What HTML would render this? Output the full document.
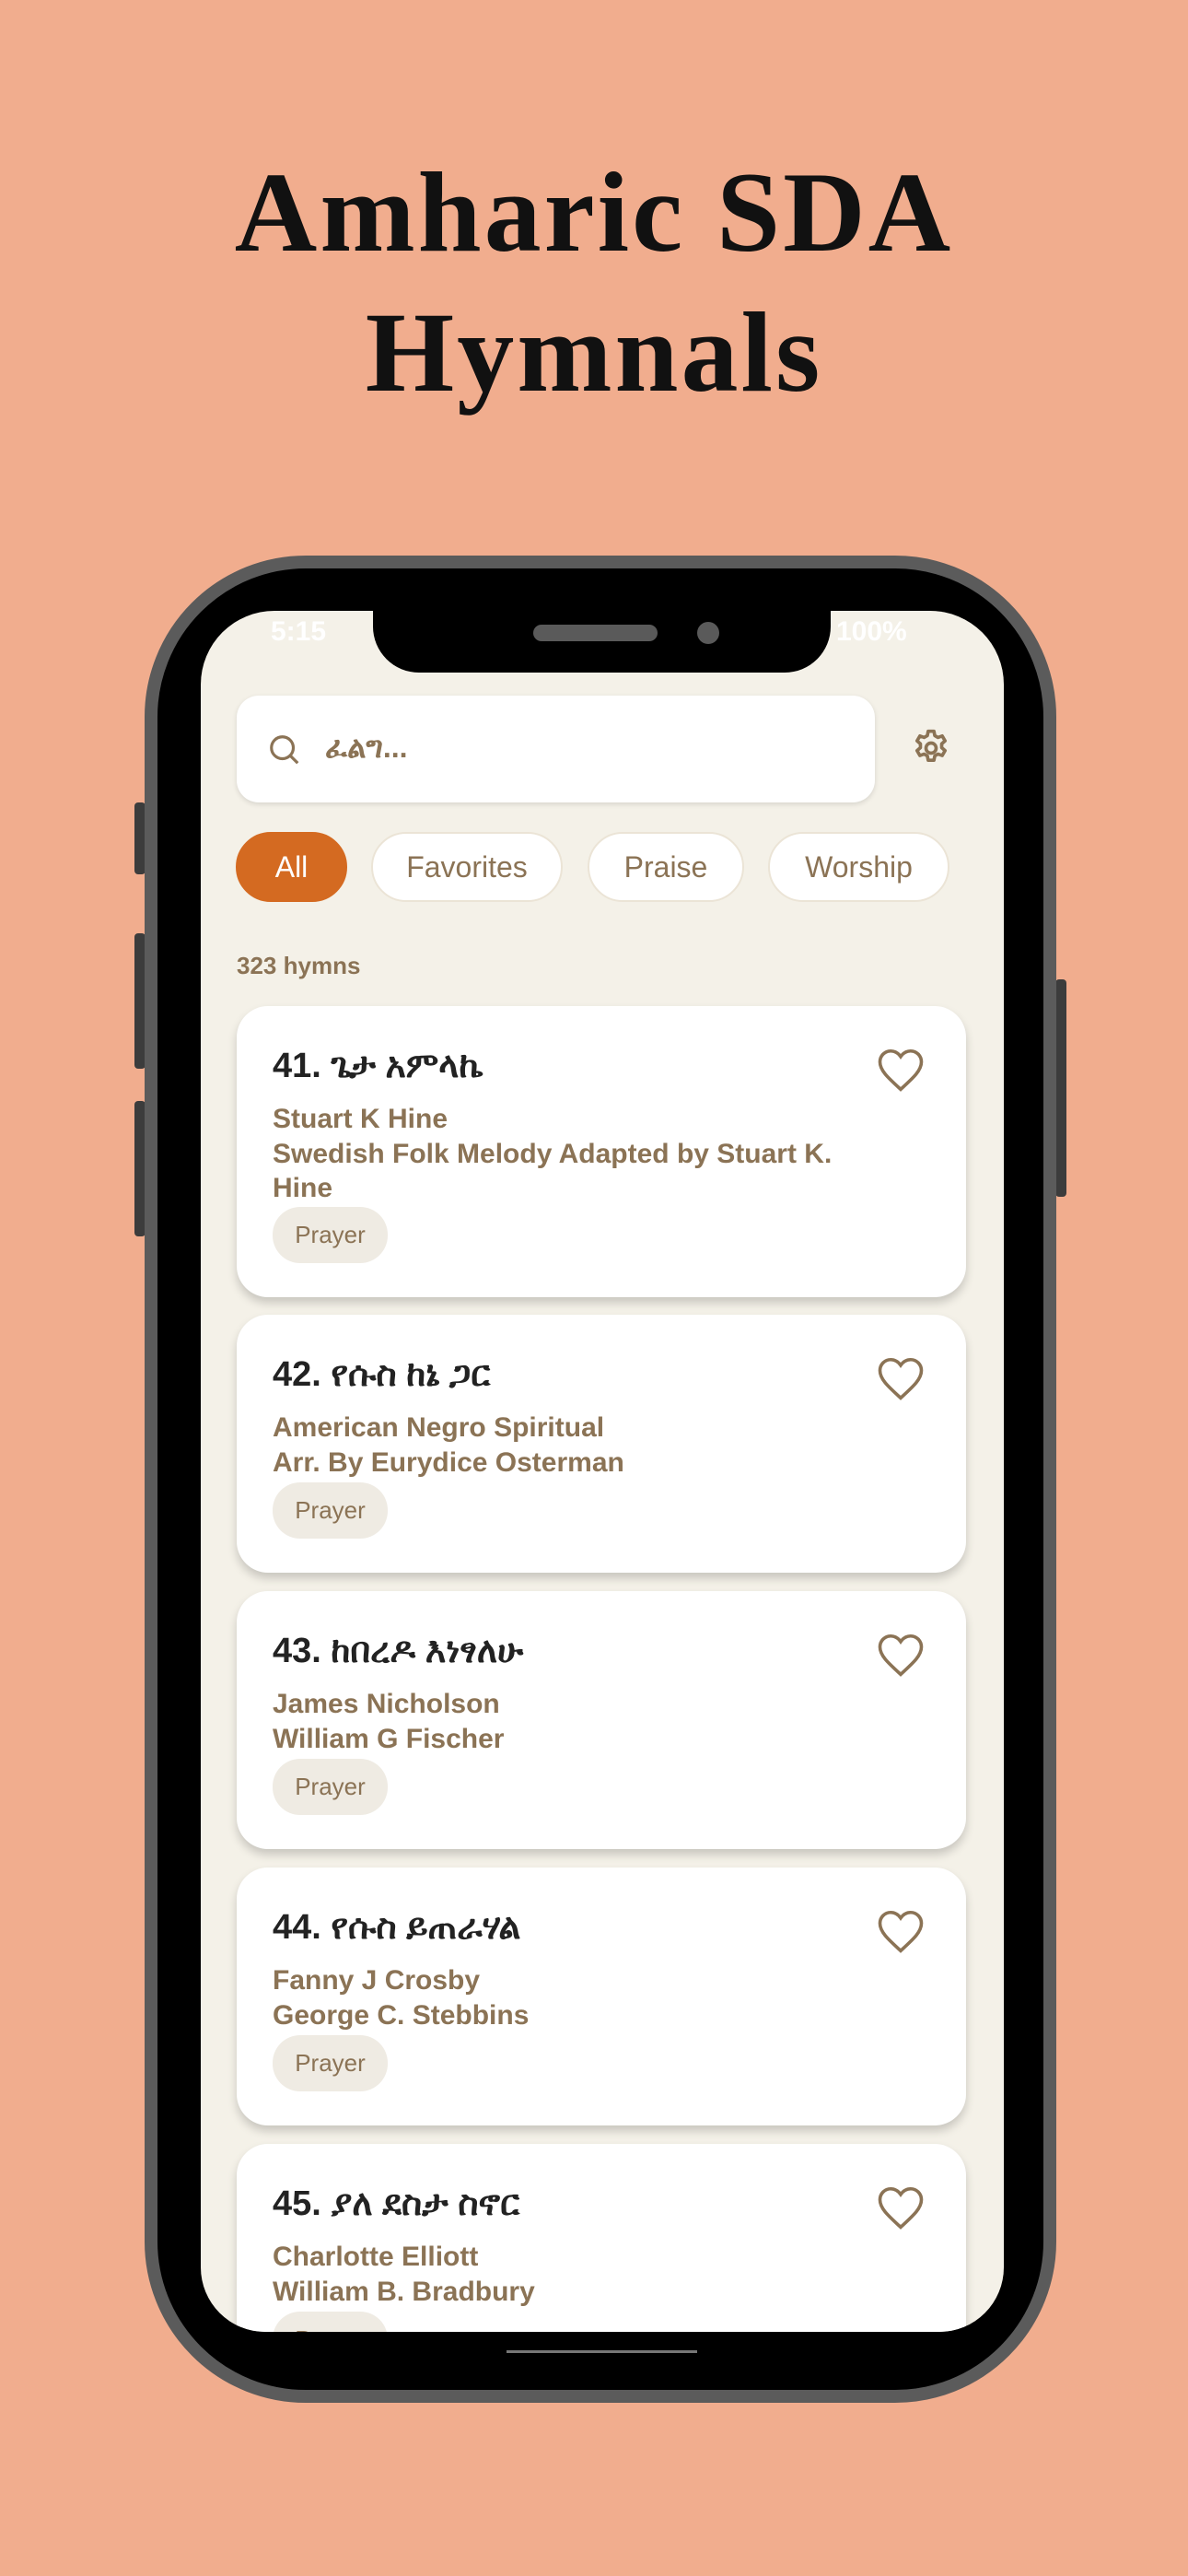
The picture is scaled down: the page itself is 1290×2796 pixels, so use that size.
<!DOCTYPE html>
<html><head><meta charset="utf-8"><style>
*{margin:0;padding:0;box-sizing:border-box}
body{width:1290px;height:2796px;background:#f1ad8e;position:relative;overflow:hidden;font-family:"Liberation Sans",sans-serif}
.t{position:absolute;left:0;width:1290px;text-align:center;font-family:"Liberation Serif",serif;font-weight:bold;font-size:124px;color:#111;letter-spacing:3px}
.btn{position:absolute;background:#3c3c3c;border-radius:4px}
.phone{position:absolute;left:157px;top:603px;width:990px;height:2005px;background:#000;border:14px solid #5b5b5b;border-radius:175px}
.screen{position:absolute;left:218px;top:663px;width:872px;height:1868px;background:#f4f1e8;border-radius:80px 80px 70px 70px;overflow:hidden}
.notch{position:absolute;left:405px;top:650px;width:497px;height:80px;background:#000;border-radius:0 0 50px 50px}
.a{position:absolute}
.chip{position:absolute;top:240px;height:76px;border-radius:38px;background:#fff;border:2px solid #ebe4d6;color:#8b7355;font-size:32px;display:flex;align-items:center;justify-content:center}
.card{position:absolute;left:39px;width:792px;background:#fff;border-radius:34px;box-shadow:0 6px 10px rgba(0,0,0,.18)}
.ti{position:absolute;left:39px;top:44px;font-size:38px;color:#222;font-weight:bold;font-family:"Liberation Sans","DejaVu Sans",sans-serif}
.au{position:absolute;left:39px;top:104px;font-size:30px;line-height:37.5px;color:#8b7355;font-weight:bold}
.pc{position:absolute;left:39px;width:125px;height:61px;border-radius:30px;background:#efebe3;color:#8b7355;font-size:26px;display:flex;align-items:center;justify-content:center}
.hr{position:absolute;right:44px;top:44px}
</style></head><body>
<div class="t" style="top:160px">Amharic SDA</div>
<div class="t" style="top:312px">Hymnals</div>
<div class="btn" style="left:146px;top:871px;width:12px;height:78px"></div>
<div class="btn" style="left:146px;top:1013px;width:12px;height:147px"></div>
<div class="btn" style="left:146px;top:1195px;width:12px;height:147px"></div>
<div class="btn" style="left:1146px;top:1063px;width:12px;height:236px"></div>
<div class="phone"></div>
<div class="screen">
 <div class="a" style="left:76px;top:6px;color:#fff;font-size:30px;font-weight:bold">5:15</div>
 <div class="a" style="left:690px;top:6px;color:#fff;font-size:30px;font-weight:bold">100%</div>
 <div class="a" style="left:39px;top:92px;width:693px;height:116px;background:#fff;border-radius:24px;box-shadow:0 2px 6px rgba(0,0,0,.12)">
  <svg class="a" style="left:33px;top:40px" width="38" height="38" viewBox="0 0 24 24" fill="none" stroke="#8b7355" stroke-width="2"><circle cx="10.5" cy="10.5" r="7.5"/><path d="M16 16l5 5"/></svg>
  <div class="a" style="left:96px;top:38px;font-size:32px;color:#8b7355;font-weight:bold;font-family:'Liberation Sans','DejaVu Sans',sans-serif">ፈልግ...</div>
 </div>
 <svg class="a" style="left:771px;top:127px" width="44" height="44" viewBox="0 0 24 24" fill="none" stroke="#8b7355" stroke-width="2" stroke-linejoin="round"><path d="M10.3 2h3.4l.5 2.6 1.9 1.1 2.5-.9 1.7 2.9-2 1.8v2.2l2 1.8-1.7 2.9-2.5-.9-1.9 1.1-.5 2.6h-3.4l-.5-2.6-1.9-1.1-2.5.9-1.7-2.9 2-1.8v-2.2l-2-1.8 1.7-2.9 2.5.9 1.9-1.1z"/><circle cx="12" cy="12" r="3"/></svg>
 <div class="chip" style="left:38px;width:121px;background:#d46a21;border-color:#d46a21;color:#fff">All</div>
 <div class="chip" style="left:185px;width:208px">Favorites</div>
 <div class="chip" style="left:420px;width:170px">Praise</div>
 <div class="chip" style="left:616px;width:197px">Worship</div>
 <div class="a" style="left:39px;top:370px;font-size:26px;color:#8b7355;font-weight:bold">323 hymns</div>

 <div class="card" style="top:429px;height:316px">
  <div class="ti">41. ጌታ አምላኬ</div>
  <div class="au">Stuart K Hine<br>Swedish Folk Melody Adapted by Stuart K.<br>Hine</div>
  <div class="pc" style="top:218px">Prayer</div>
  <svg class="hr" width="54" height="50" viewBox="0 0 24 22" fill="none" stroke="#8b7355" stroke-width="1.6"><path d="M12 20.5C6 15 2 11.5 2 7.3 2 4.3 4.3 2 7.2 2c2 0 3.6 1 4.8 2.7C13.2 3 14.8 2 16.8 2 19.7 2 22 4.3 22 7.3c0 4.2-4 7.7-10 13.2z"/></svg>
 </div>
 <div class="card" style="top:764px;height:280px">
  <div class="ti">42. የሱስ ከኔ ጋር</div>
  <div class="au">American Negro Spiritual<br>Arr. By Eurydice Osterman</div>
  <div class="pc" style="top:182px">Prayer</div>
  <svg class="hr" width="54" height="50" viewBox="0 0 24 22" fill="none" stroke="#8b7355" stroke-width="1.6"><path d="M12 20.5C6 15 2 11.5 2 7.3 2 4.3 4.3 2 7.2 2c2 0 3.6 1 4.8 2.7C13.2 3 14.8 2 16.8 2 19.7 2 22 4.3 22 7.3c0 4.2-4 7.7-10 13.2z"/></svg>
 </div>
 <div class="card" style="top:1064px;height:280px">
  <div class="ti">43. ከበረዶ እነፃለሁ</div>
  <div class="au">James Nicholson<br>William G Fischer</div>
  <div class="pc" style="top:182px">Prayer</div>
  <svg class="hr" width="54" height="50" viewBox="0 0 24 22" fill="none" stroke="#8b7355" stroke-width="1.6"><path d="M12 20.5C6 15 2 11.5 2 7.3 2 4.3 4.3 2 7.2 2c2 0 3.6 1 4.8 2.7C13.2 3 14.8 2 16.8 2 19.7 2 22 4.3 22 7.3c0 4.2-4 7.7-10 13.2z"/></svg>
 </div>
 <div class="card" style="top:1364px;height:280px">
  <div class="ti">44. የሱስ ይጠራሃል</div>
  <div class="au">Fanny J Crosby<br>George C. Stebbins</div>
  <div class="pc" style="top:182px">Prayer</div>
  <svg class="hr" width="54" height="50" viewBox="0 0 24 22" fill="none" stroke="#8b7355" stroke-width="1.6"><path d="M12 20.5C6 15 2 11.5 2 7.3 2 4.3 4.3 2 7.2 2c2 0 3.6 1 4.8 2.7C13.2 3 14.8 2 16.8 2 19.7 2 22 4.3 22 7.3c0 4.2-4 7.7-10 13.2z"/></svg>
 </div>
 <div class="card" style="top:1664px;height:280px">
  <div class="ti">45. ያለ ደስታ ስኖር</div>
  <div class="au">Charlotte Elliott<br>William B. Bradbury</div>
  <div class="pc" style="top:182px">Prayer</div>
  <svg class="hr" width="54" height="50" viewBox="0 0 24 22" fill="none" stroke="#8b7355" stroke-width="1.6"><path d="M12 20.5C6 15 2 11.5 2 7.3 2 4.3 4.3 2 7.2 2c2 0 3.6 1 4.8 2.7C13.2 3 14.8 2 16.8 2 19.7 2 22 4.3 22 7.3c0 4.2-4 7.7-10 13.2z"/></svg>
 </div>
</div>
<div class="notch"></div>
<div class="a" style="left:579px;top:678px;width:135px;height:18px;background:#5a5a5a;border-radius:9px"></div>
<div class="a" style="left:757px;top:675px;width:24px;height:24px;background:#5a5a5a;border-radius:50%"></div>
<div class="a" style="left:550px;top:2551px;width:207px;height:3px;background:#777"></div>
</body></html>
